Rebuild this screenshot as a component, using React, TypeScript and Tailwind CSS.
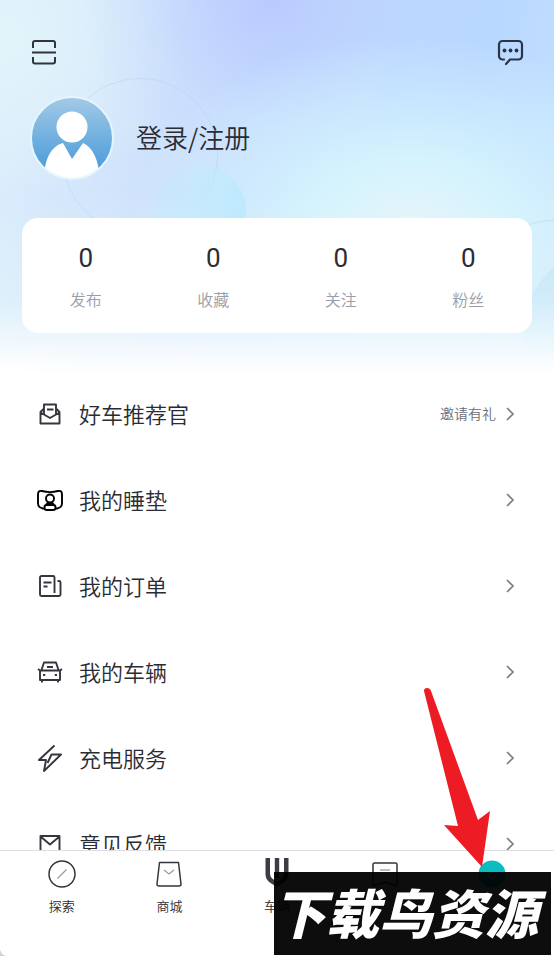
import React from "react";

const stats = ["发布", "收藏", "关注", "粉丝"];

function ScanIcon() {
  return (
    <svg width="28" height="28" viewBox="0 0 28 28" fill="none" stroke="#32343d" strokeWidth="2">
      <path d="M3 10V5a2 2 0 0 1 2-2h18a2 2 0 0 1 2 2v5M3 19v4.500a2 2 0 0 0 2 2h18a2 2 0 0 0 2-2V19M2 14.500h24" />
    </svg>
  );
}

function MessageIcon() {
  return (
    <svg width="28" height="28" viewBox="0 0 28 28" fill="none" stroke="#2b3548" strokeWidth="2.200" strokeLinecap="round" strokeLinejoin="round">
      <path d="M8 21.500H6.500A3.500 3.500 0 0 1 3 18V6.500A3.500 3.500 0 0 1 6.500 3h16A3.500 3.500 0 0 1 26 6.500V18a3.500 3.500 0 0 1-3.500 3.500H14l-4 4.500" />
      <g fill="#2b3548" stroke="none">
        <circle cx="8.500" cy="12.500" r="1.900" />
        <circle cx="14.500" cy="12.500" r="1.900" />
        <circle cx="20.500" cy="12.500" r="1.900" />
      </g>
    </svg>
  );
}

function Avatar() {
  return (
    <svg width="84" height="84" viewBox="0 0 84 84" className="shrink-0">
      <defs>
        <linearGradient id="avatarFill" x1="0" y1="0" x2="0" y2="1">
          <stop offset="0" stopColor="#a3cae6" />
          <stop offset="1" stopColor="#3f96d8" />
        </linearGradient>
        <clipPath id="avatarClip">
          <circle cx="42" cy="42" r="41" />
        </clipPath>
      </defs>
      <circle cx="42" cy="42" r="41" fill="url(#avatarFill)" />
      <g clipPath="url(#avatarClip)" fill="#fff">
        <circle cx="42" cy="31" r="15.500" />
        <path d="M14 84c0-20 7-34 19-37l9 16 11-16c10 4 16 18 17 37z" />
      </g>
      <circle cx="42" cy="42" r="41" fill="none" stroke="#e6f5fd" strokeWidth="2" />
    </svg>
  );
}

function Chevron() {
  return (
    <svg width="10" height="16" viewBox="0 0 10 16" fill="none" stroke="#7d7f89" strokeWidth="1.700">
      <path d="M2 2l6 6-6 6" />
    </svg>
  );
}

const iconProps = {
  width: 28,
  height: 28,
  viewBox: "0 0 28 28",
  fill: "none",
  stroke: "#35363d",
  strokeWidth: 1.9,
  strokeLinejoin: "round" as const,
};

const items = [
  {
    label: "好车推荐官",
    note: "邀请有礼",
    icon: (
      <svg {...iconProps}>
        <path d="M8 14V4.500h12V14M7.500 9L4.500 12v11.500h19V12l-3-3M4.500 12.500L14 18l9.500-5.500M11 9.500h6.500" />
      </svg>
    ),
  },
  {
    label: "我的睡垫",
    icon: (
      <svg {...iconProps} stroke="#000">
        <path d="M8.500 22.500H6.500L3.500 21Q2 20 2 17V9c0-3.500 1-4.500 4-4 5.500 1.500 10.500 1.500 16 0 3-.5 4 .5 4 4v8q0 3-1.500 4l-3 1.500h-2" />
        <circle cx="14" cy="12.500" r="4" />
        <rect x="8.500" y="19" width="11" height="5" rx="2.300" />
        <path d="M10 19l1.500-2h5l1.500 2" />
      </svg>
    ),
  },
  {
    label: "我的订单",
    icon: (
      <svg {...iconProps}>
        <path d="M18.500 21V5.500A1.500 1.500 0 0 0 17 4H5.500A1.500 1.500 0 0 0 4 5.500v17A1.500 1.500 0 0 0 5.500 24H23a1.500 1.500 0 0 0 1.500-1.500v-12A1.500 1.500 0 0 0 23 9h-1.500M7.500 10.500h8M7.500 14.500h4" />
      </svg>
    ),
  },
  {
    label: "我的车辆",
    icon: (
      <svg {...iconProps}>
        <path d="M5.500 12L8 4.500h12l2.500 7.500M11 9h6M4 12.500h20V22H4zM2 11l2 1.500M26 11l-2 1.500M6 22v2.500M22 22v2.500M7 17h2.200M18.800 17H21" />
      </svg>
    ),
  },
  {
    label: "充电服务",
    icon: (
      <svg {...iconProps}>
        <path d="M18.500 1.500L3 16h7L8 27 25 10.500H15.500L11.500 19" />
      </svg>
    ),
  },
  {
    label: "意见反馈",
    icon: (
      <svg {...iconProps}>
        <path d="M4.500 6h19v17h-19zM4.500 6.500l9.500 8 9.500-8" />
      </svg>
    ),
  },
];

const tabs = [
  {
    label: "探索",
    showLabel: true,
    icon: (
      <svg width="28" height="28" viewBox="0 0 28 28" fill="none">
        <circle cx="14" cy="14" r="13" stroke="#35363d" strokeWidth="1.500" />
        <path d="M9.500 18.500l9-9" stroke="#9a9ba0" strokeWidth="1.300" />
      </svg>
    ),
  },
  {
    label: "商城",
    showLabel: true,
    icon: (
      <svg width="28" height="28" viewBox="0 0 28 28" fill="none">
        <path d="M4.500 2.500h19L26 24c0 1.300-.8 2-2 2H4c-1.200 0-2-.7-2-2z" stroke="#35363d" strokeWidth="1.500" strokeLinejoin="round" />
        <path d="M9 10l5 4 5-4" stroke="#9a9ba0" strokeWidth="1.300" />
      </svg>
    ),
  },
  {
    label: "车辆",
    showLabel: true,
    icon: (
      <svg width="28" height="28" viewBox="0 0 28 28" fill="#3b3c48" className="overflow-visible">
        <path d="M2.500-2h4.500v15q0 4.500 3.500 6.500l3.500 2 3.500-2q3.500-2 3.500-6.500V-2h4.500v16q0 6-5 9L14 27l-6.500-4q-5-3-5-9zM11.800-2h4.400v20h-4.400z" />
      </svg>
    ),
  },
  {
    label: "社区",
    showLabel: false,
    icon: (
      <svg width="28" height="28" viewBox="0 0 28 28" fill="none">
        <path d="M2 4.500Q2 3 3.500 3h21Q26 3 26 4.500V26l-12-4-12 4z" stroke="#35363d" strokeWidth="1.500" strokeLinejoin="round" />
        <path d="M9 10h10" stroke="#9a9ba0" strokeWidth="1.300" />
      </svg>
    ),
  },
  {
    label: "我的",
    showLabel: false,
    icon: (
      <svg width="28" height="28" viewBox="0 0 28 28" fill="none">
        <circle cx="14" cy="14" r="13.500" fill="#0bbcc1" />
        <path d="M9 15l5 4 5-4" stroke="#fff" strokeWidth="1.300" />
      </svg>
    ),
  },
];

export default function App() {
  return (
    <div className="h-screen bg-[#d2d2d4] font-['Noto_Sans_CJK_SC',sans-serif] font-[350] text-[#2b2c33]">
      <div className="relative flex h-full flex-col overflow-hidden rounded-bl-lg bg-white">
        <main className="min-h-0 flex-1 overflow-hidden">
          <header className="relative overflow-hidden bg-[radial-gradient(ellipse_280px_190px_at_74%_225px,#e6f5fb_0%,#d6f5fdee_35%,#c8ebfd00_100%),radial-gradient(ellipse_190px_180px_at_49%_0px,#b9caff_0%,#bccfffaa_35%,#c3d6ff44_70%,#c8daff00_100%),radial-gradient(ellipse_190px_160px_at_0%_40px,#e2f5fa_0%,#dff2fa00_100%),linear-gradient(100deg,#dceefb_0%,#cfe2fb_28%,#c8ddfd_42%,#b9d7ff_65%,#b9d8ff_80%,#c4e0ff_100%)] px-[22px] pt-9 pb-10">
            <div className="absolute top-[78px] left-[62px] size-[156px] rounded-full border border-[#b5cff2]/50" />
            <div className="absolute top-[165px] left-[154px] size-[92px] rounded-full bg-linear-to-br from-[#c8e8fc]/0 via-[#bfeafd]/70 to-[#b0e5ff]" />
            <div className="absolute top-[220px] -right-[80px] size-[160px] rounded-full border border-[#b5cff2]/60" />
            <div className="absolute top-[250px] -right-[130px] size-[160px] rounded-full bg-[#b9e2fb]" />
            <div className="absolute inset-x-0 bottom-0 h-[180px] bg-linear-to-b from-[#e2f3fa]/0 via-[#e2f3fa]/60 via-60% to-white" />
            <div className="relative flex h-8 items-center justify-between px-2">
              <button aria-label="扫一扫">
                <ScanIcon />
              </button>
              <button aria-label="消息">
                <MessageIcon />
              </button>
            </div>
            <a href="#login" className="relative mt-7 flex items-center gap-[22px] px-2">
              <Avatar />
              <span className="pb-[2px] text-[26px] leading-8">登录/注册</span>
            </a>
            <section className="relative mt-[38px] grid grid-cols-4 rounded-2xl bg-white pt-6 pb-[22px] text-center">
              {stats.map((s) => (
                <a key={s} href={"#" + s} className="flex flex-col gap-[13px]">
                  <span className="font-[Roboto] text-[26px] leading-8 font-normal">0</span>
                  <span className="text-base leading-6 text-[#9c9ea7]">{s}</span>
                </a>
              ))}
            </section>
          </header>
          <ul className="-mt-[2px]">
            {items.map((it) => (
              <li key={it.label}>
                <a href={"#" + it.label} className="flex h-[86px] items-center px-9 text-[22px]">
                  {it.icon}
                  <span className="ml-[15px] flex-1 pb-[2px]">{it.label}</span>
                  {it.note && <span className="mr-[9px] pb-[2px] text-sm text-[#6b6e79]">{it.note}</span>}
                  <span className="pr-[3px]">
                    <Chevron />
                  </span>
                </a>
              </li>
            ))}
          </ul>
        </main>
        <nav className="grid h-[106px] shrink-0 grid-cols-5 border-t border-[#dedee0] bg-white px-2">
          {tabs.map((t) => (
            <a key={t.label} href={"#" + t.label} aria-label={t.label} className="flex flex-col items-center pt-[9px] text-[13px]">
              {t.icon}
              {t.showLabel && <span className="mt-2 leading-5">{t.label}</span>}
            </a>
          ))}
        </nav>
        <svg width="76" height="184" viewBox="0 0 76 184" className="absolute right-[62px] bottom-[86px]" fill="#ed1c24">
          <path d="M8 5q0-3 3-3t4 3L62 134l12-9-8 56L28 139l14 1z" />
        </svg>
        <div className="absolute right-[3px] bottom-px flex h-[83px] w-[277px] items-center justify-center bg-black/95 pr-[14px] pb-[5px]">
          <span className="text-[53px] leading-none font-black whitespace-nowrap text-white italic">下载鸟资源</span>
        </div>
      </div>
    </div>
  );
}
